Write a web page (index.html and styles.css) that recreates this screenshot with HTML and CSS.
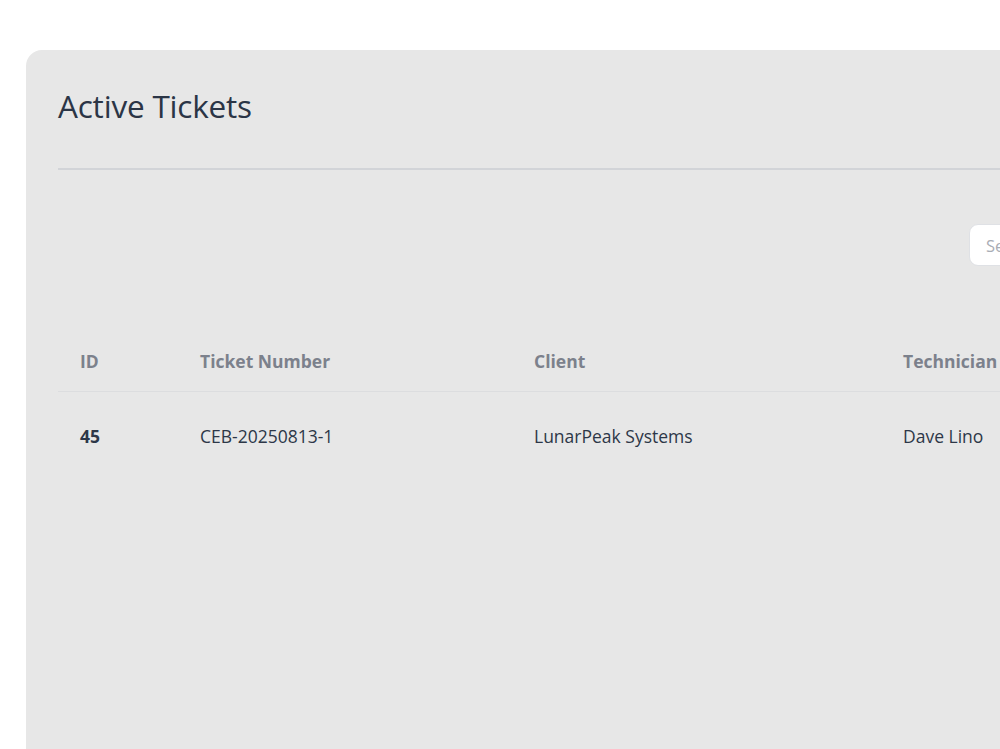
FILE: index.html
```html
<!DOCTYPE html>
<html lang="en">
<head>
<meta charset="utf-8">
<title>Active Tickets</title>
<link rel="stylesheet" href="styles.css">
</head>
<body>
<main class="page">
  <section class="card">
    <header class="card-header">
      <h1 class="card-title">Active Tickets</h1>
    </header>
    <div class="toolbar">
      <input class="search" type="text" placeholder="Search tickets...">
    </div>
    <table class="tickets">
      <colgroup>
        <col class="col-id">
        <col class="col-number">
        <col class="col-client">
        <col class="col-tech">
        <col class="col-rest">
      </colgroup>
      <thead>
        <tr>
          <th>ID</th>
          <th>Ticket Number</th>
          <th>Client</th>
          <th>Technician</th>
          <th>Status</th>
        </tr>
      </thead>
      <tbody>
        <tr>
          <td class="cell-id">45</td>
          <td>CEB-20250813-1</td>
          <td>LunarPeak Systems</td>
          <td>Dave Lino</td>
          <td>Open</td>
        </tr>
      </tbody>
    </table>
  </section>
</main>
</body>
</html>
```
FILE: styles.css
```css
html, body {
  margin: 0;
  background: #ffffff;
  overflow: hidden;
}

body {
  font-family: "Open Sans", "Noto Sans", "Liberation Sans", sans-serif;
  color: #2d3748;
}

.page {
  padding: 50px 0 0 26px;
}

.card {
  width: 1200px;
  min-height: 760px;
  box-sizing: border-box;
  background: #e7e7e7;
  border-radius: 16px;
  padding: 37px 32px 32px;
}

.card-header {
  border-bottom: 2px solid #d2d4d8;
  padding-bottom: 43px;
}

.card-title {
  margin: 0;
  font-size: 31.5px;
  line-height: 38px;
  font-weight: 400;
  color: #2b3546;
  letter-spacing: -0.2px;
}

.toolbar {
  display: flex;
  justify-content: flex-end;
  margin-top: 54px;
}

.search {
  width: 225px;
  height: 42px;
  box-sizing: border-box;
  border: 1px solid #dfe1e5;
  border-radius: 9px;
  background: #ffffff;
  padding: 0 16px;
  font: inherit;
  font-size: 16.5px;
  color: #2d3748;
}

.search::placeholder {
  color: #a9adb5;
}

.tickets {
  width: 100%;
  table-layout: fixed;
  border-collapse: collapse;
  margin-top: 67px;
}

.col-id { width: 120px; }
.col-number { width: 334px; }
.col-client { width: 369px; }
.col-tech { width: 200px; }

.tickets th,
.tickets td {
  text-align: left;
  padding-left: 22px;
  padding-right: 20px;
  font-size: 17.5px;
  line-height: 25px;
  white-space: nowrap;
}

.tickets th {
  padding-top: 16px;
  padding-bottom: 17px;
  font-weight: 700;
  color: #7c818c;
  border-bottom: 1px solid #dcdddf;
}

.tickets td {
  padding-top: 32px;
  padding-bottom: 32px;
  color: #2d3748;
}

.tickets .cell-id {
  font-weight: 700;
}
```
